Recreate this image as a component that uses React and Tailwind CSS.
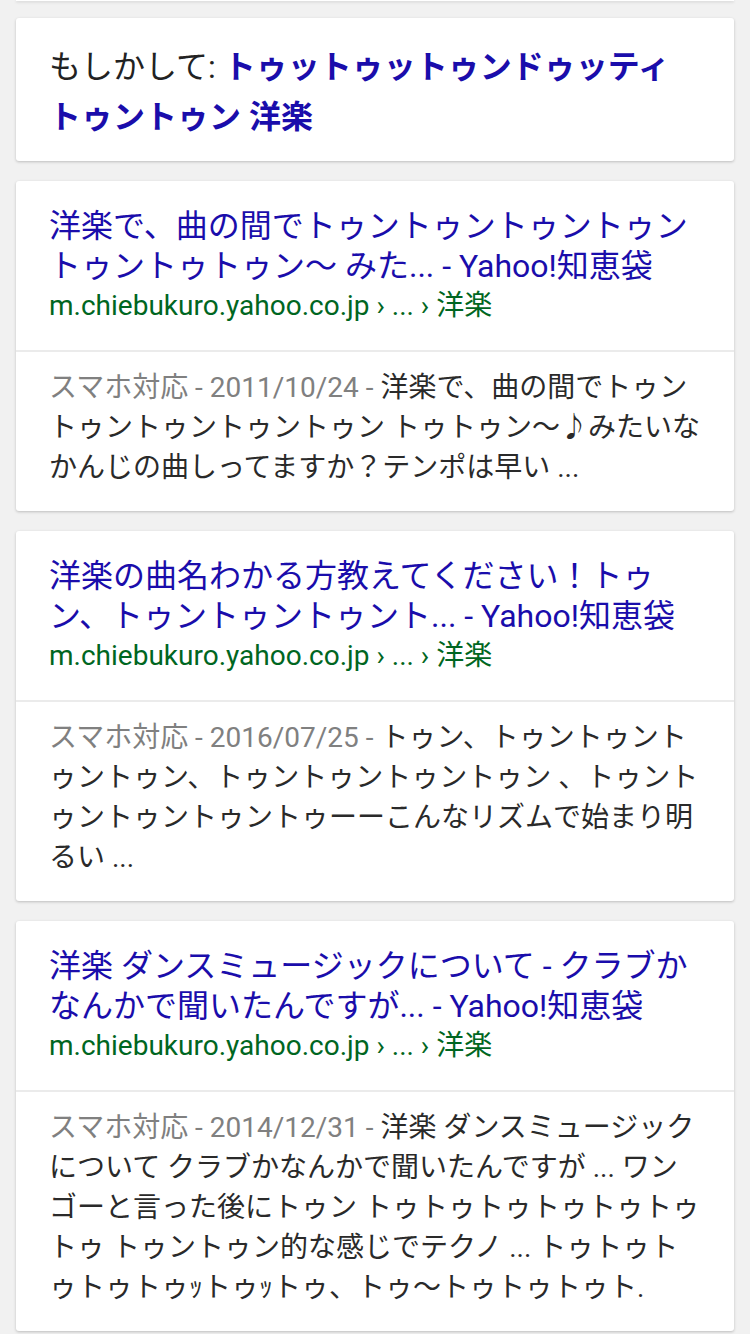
const results = [
  {
    title: '洋楽で、曲の間でトゥントゥントゥントゥントゥントゥトゥン〜 みた... - Yahoo!知恵袋',
    date: '2011/10/24',
    snippet: '洋楽で、曲の間でトゥントゥントゥントゥントゥン トゥトゥン〜♪みたいなかんじの曲しってますか？テンポは早い ...',
  },
  {
    title: '洋楽の曲名わかる方教えてください！トゥン、トゥントゥントゥント... - Yahoo!知恵袋',
    date: '2016/07/25',
    snippet: 'トゥン、トゥントゥントゥントゥン、トゥントゥントゥントゥン 、トゥントゥントゥントゥントゥーーこんなリズムで始まり明るい ...',
  },
  {
    title: '洋楽 ダンスミュージックについて - クラブかなんかで聞いたんですが... - Yahoo!知恵袋',
    date: '2014/12/31',
    snippet: '洋楽 ダンスミュージックについて クラブかなんかで聞いたんですが ... ワンゴーと言った後にトゥン トゥトゥトゥトゥトゥトゥトゥ トゥントゥン的な感じでテクノ ... トゥトゥトゥトゥトゥｯトゥｯトゥ、トゥ〜トゥトゥトゥト.',
  },
]

const font = "font-['Roboto','Noto_Sans_CJK_JP',sans-serif]"

function ResultCard({ r }) {
  return (
    <div className="bg-white rounded-[3px] shadow-[0_1px_3px_rgba(0,0,0,0.22)]">
      <div className="px-[33px] pt-[25px] pb-[24px]">
        <div className="text-[32px] leading-[40px] text-[#1a0dab]">{r.title}</div>
        <div className="text-[28px] leading-[40px] text-[#006621]">m.chiebukuro.yahoo.co.jp › ... › 洋楽</div>
      </div>
      <div className="border-t-2 border-[#ebebeb] px-[33px] pt-[16px] pb-[23px] text-[28px] leading-[40px] text-[#2a2a2a]">
        <span className="text-[#808080]">スマホ対応 - {r.date} - </span>
        {r.snippet}
      </div>
    </div>
  )
}

export default function App() {
  return (
    <div className={`min-h-screen bg-[#f1f1f1] px-4 flex flex-col gap-[20px] ${font}`}>
      <div className="h-px -mb-[3px] bg-white shadow-[0_1px_3px_rgba(0,0,0,0.22)]" />
      <div className="bg-white rounded-[3px] shadow-[0_1px_3px_rgba(0,0,0,0.22)] px-[33px] pt-[24px] pb-[19px] text-[32px] leading-[50px] text-[#222]">
        もしかして: <b className="text-[#1a0dab] font-bold">トゥットゥットゥンドゥッティ<br />トゥントゥン 洋楽</b>
      </div>
      {results.map((r, i) => <ResultCard key={i} r={r} />)}
    </div>
  )
}
